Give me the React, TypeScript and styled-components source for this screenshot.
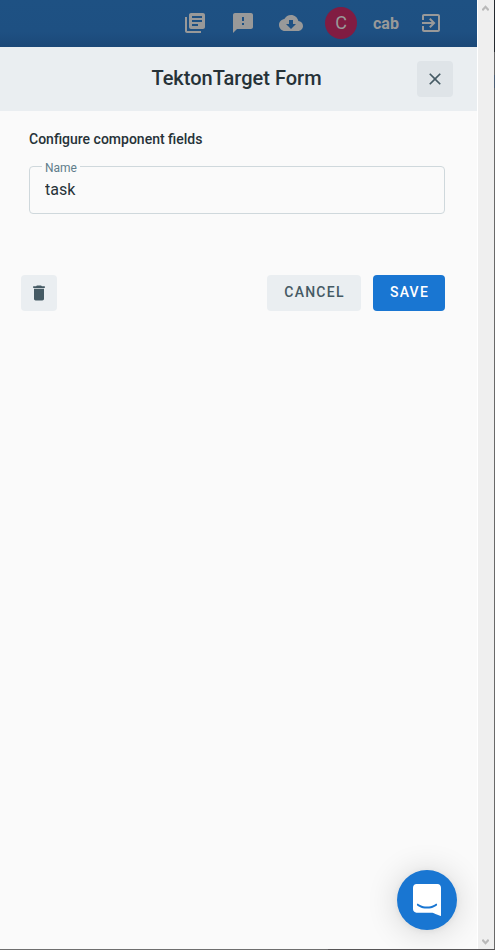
import React from 'react';
import styled, { createGlobalStyle } from 'styled-components';

const GlobalStyle = createGlobalStyle`
  * { box-sizing: border-box; }
  body { margin: 0; font-family: Roboto, sans-serif; background: #fafafa; overflow: hidden; }
  button { font-family: inherit; border: 0; padding: 0; margin: 0; }
`;

const Frame = styled.div`
  height: 950px;
  width: 495px;
  display: grid;
  grid-template-columns: 477px 1px 16px 1px;
  grid-template-rows: 949px 1px;
`;

const Screen = styled.main`
  position: relative;
  display: flex;
  flex-direction: column;
  background: #fafafa;
  overflow: hidden;
`;

const Gap = styled.div`
  background: #ffffff;
`;

const Scrollbar = styled.div`
  background: #efefef;
  display: flex;
  flex-direction: column;
  align-items: flex-start;
  justify-content: space-between;
  padding: 5px 0 4px 4px;
`;

const Arrow = styled.svg<{ $down?: boolean }>`
  display: block;
  transform: ${({ $down }) => ($down ? 'rotate(180deg)' : 'none')};
`;

const WindowEdge = styled.div`
  background: linear-gradient(#24292e 52px, #696969 52px, #696969 75px, #4b5d72 75px, #4b5d72 88px, #696969 88px);
`;

const WindowBottom = styled.div`
  grid-column: 1 / -1;
  background: linear-gradient(90deg, #6e6e6e 328px, #565456 328px);
`;

const TopBar = styled.header`
  height: 47px;
  flex: none;
  background: linear-gradient(#1e5183 0, #1e5082 32px, #1b4878 47px);
  color: #999999;
  display: flex;
  align-items: center;
  padding: 0 34px 1px 183px;
`;

const BarIcon = styled.svg<{ $gap: number }>`
  width: 24px;
  height: 24px;
  flex: none;
  fill: currentColor;
  margin-right: ${({ $gap }) => $gap}px;
`;

const Avatar = styled.div`
  width: 32px;
  height: 32px;
  border-radius: 50%;
  background: #811c42;
  font-size: 18px;
  line-height: 32px;
  text-align: center;
`;

const UserName = styled.span`
  width: 46px;
  margin-left: 16px;
  padding-top: 2px;
  font-size: 16px;
  font-weight: 700;
  line-height: 24px;
`;

const TitleBar = styled.div`
  height: 64px;
  flex: none;
  background: #eaeef1;
  display: grid;
  grid-template-columns: 36px 1fr 36px;
  align-items: center;
  padding: 0 24px;
`;

const Title = styled.h1`
  grid-column: 2;
  margin: 0 0 2px -4px;
  text-align: center;
  font-size: 20px;
  line-height: 24px;
  font-weight: 500;
  color: #263238;
`;

const IconButton = styled.button<{ $tone: string }>`
  width: 36px;
  height: 36px;
  border-radius: 4px;
  background: ${({ $tone }) => $tone};
  color: #455a64;
  display: flex;
  align-items: center;
  justify-content: center;
`;

const Form = styled.form`
  padding: 19px 32px 0 29px;
`;

const SectionTitle = styled.h2`
  margin: 0;
  font-size: 14px;
  line-height: 18px;
  font-weight: 500;
  color: #263238;
`;

const Field = styled.fieldset`
  height: 55px;
  margin: 11px 0 0;
  padding: 0 15px;
  border: 1px solid #cfd8dc;
  border-radius: 4px;
  min-width: 0;
`;

const Label = styled.legend`
  margin-left: -3px;
  padding: 3px 3px 0;
  font-size: 12px;
  line-height: 12px;
  color: #607d8b;
`;

const Input = styled.input`
  display: block;
  width: 100%;
  height: 20px;
  margin: 6px 0 0;
  border: 0;
  padding: 0;
  outline: 0;
  background: transparent;
  font: 400 16px/20px Roboto, sans-serif;
  color: #263238;
`;

const Actions = styled.div`
  display: flex;
  gap: 12px;
  margin: 61px 0 0 -8px;
`;

const Spacer = styled.div`
  flex: 1;
`;

const ActionButton = styled.button<{ $primary?: boolean; $width: number }>`
  width: ${({ $width }) => $width}px;
  height: 36px;
  border-radius: 4px;
  background: ${({ $primary }) => ($primary ? '#1976d2' : '#eaeef1')};
  color: ${({ $primary }) => ($primary ? '#ffffff' : '#455a64')};
  font-size: 14px;
  line-height: 34px;
  font-weight: 500;
  letter-spacing: 1.25px;
  padding: 0 0 2px 1px;
`;

const ChatLauncher = styled.button`
  position: absolute;
  right: 20px;
  bottom: 19px;
  width: 60px;
  height: 60px;
  border-radius: 50%;
  background: #1976d2;
  box-shadow: 0 1px 6px rgba(0, 0, 0, 0.06), 0 2px 32px rgba(0, 0, 0, 0.16);
  display: flex;
  align-items: center;
  justify-content: center;
`;

const ScrollArrow = ({ down }: { down?: boolean }) => (
  <Arrow $down={down} width="7" height="7" viewBox="0 0 7 7">
    <path d="M.3 5.300 3.500 1.800 6.700 5.300" fill="none" stroke="#b9b9b9" strokeWidth="2.200" />
  </Arrow>
);

export default function App() {
  return (
    <>
      <GlobalStyle />
      <Frame>
        <Screen>
          <TopBar>
            <BarIcon $gap={24} viewBox="0 0 24 24">
              <path d="M4 6H2v14c0 1.1.9 2 2 2h14v-2H4V6zm16-4H8c-1.1 0-2 .9-2 2v12c0 1.1.9 2 2 2h12c1.1 0 2-.9 2-2V4c0-1.1-.9-2-2-2zm-1 9H9V9h10v2zm-4 4H9v-2h6v2zm4-8H9V5h10v2z" />
            </BarIcon>
            <BarIcon $gap={24} viewBox="0 0 24 24">
              <path d="M20 2H4c-1.1 0-1.99.9-1.99 2L2 22l4-4h14c1.1 0 2-.9 2-2V4c0-1.1-.9-2-2-2zm-7 12h-2v-2h2v2zm0-4h-2V6h2v4z" />
            </BarIcon>
            <BarIcon $gap={22} viewBox="0 0 24 24">
              <path d="M19.35 10.04C18.67 6.59 15.64 4 12 4 9.11 4 6.6 5.64 5.35 8.04 2.34 8.36 0 10.91 0 14c0 3.31 2.69 6 6 6h13c2.76 0 5-2.24 5-5 0-2.64-2.05-4.78-4.65-4.96zM17 13l-5 5-5-5h3V9h4v4h3z" />
            </BarIcon>
            <Avatar>C</Avatar>
            <UserName>cab</UserName>
            <BarIcon $gap={0} viewBox="0 0 24 24">
              <path d="M10.09 15.59 11.5 17l5-5-5-5-1.41 1.41L12.67 11H3v2h9.67l-2.58 2.59zM19 3H5c-1.11 0-2 .9-2 2v4h2V5h14v14H5v-4H3v4c0 1.1.89 2 2 2h14c1.1 0 2-.9 2-2V5c0-1.1-.9-2-2-2z" />
            </BarIcon>
          </TopBar>
          <TitleBar>
            <Title>TektonTarget Form</Title>
            <IconButton $tone="#dfe4e8" aria-label="Close">
              <svg width="20" height="20" viewBox="0 0 24 24" fill="currentColor">
                <path d="M19 6.41 17.59 5 12 10.59 6.41 5 5 6.41 10.59 12 5 17.59 6.41 19 12 13.41 17.59 19 19 17.59 13.41 12z" />
              </svg>
            </IconButton>
          </TitleBar>
          <Form onSubmit={(e) => e.preventDefault()}>
            <SectionTitle>Configure component fields</SectionTitle>
            <Field>
              <Label>Name</Label>
              <Input aria-label="Name" defaultValue="task" />
            </Field>
            <Actions>
              <IconButton $tone="#eaeef1" type="button" aria-label="Delete">
                <svg width="20" height="20" viewBox="0 0 24 24" fill="currentColor">
                  <path d="M6 19c0 1.1.9 2 2 2h8c1.1 0 2-.9 2-2V7H6v12zM19 4h-3.500l-1-1h-5l-1 1H5v2h14V4z" />
                </svg>
              </IconButton>
              <Spacer />
              <ActionButton $width={94} type="button">CANCEL</ActionButton>
              <ActionButton $width={72} $primary type="submit">SAVE</ActionButton>
            </Actions>
          </Form>
          <ChatLauncher aria-label="Open chat">
            <svg width="28" height="32" viewBox="0 0 28 32" fill="#ffffff">
              <path d="M28 32s-4.714-1.855-8.527-3.340H3.437C1.540 28.660 0 27.026 0 25.013V3.644C0 1.633 1.540 0 3.437 0h21.125c1.898 0 3.437 1.632 3.437 3.645v18.404H28V32zm-4.139-11.982a.88.88 0 00-1.292-.105c-.030.026-3.015 2.681-8.570 2.681-5.486 0-8.517-2.636-8.571-2.684a.88.88 0 00-1.290.107 1.010 1.010 0 00-.219.708.992.992 0 00.318.664c.142.128 3.537 3.150 9.762 3.150 6.226 0 9.621-3.022 9.763-3.150a.992.992 0 00.317-.664 1.010 1.010 0 00-.218-.707z" />
            </svg>
          </ChatLauncher>
        </Screen>
        <Gap />
        <Scrollbar>
          <ScrollArrow />
          <ScrollArrow down />
        </Scrollbar>
        <WindowEdge />
        <WindowBottom />
      </Frame>
    </>
  );
}
